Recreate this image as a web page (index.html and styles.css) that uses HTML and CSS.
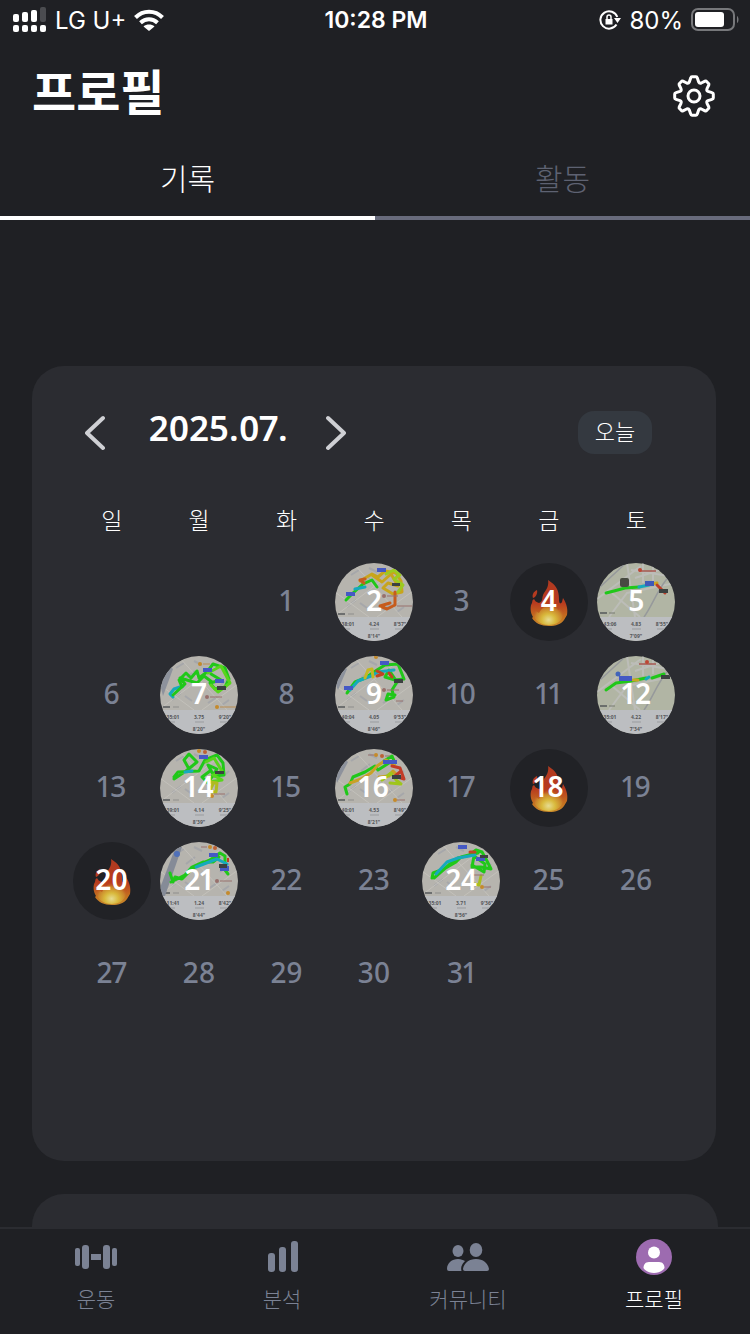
FILE: index.html
```html
<!DOCTYPE html>
<html lang="ko">
<head>
<meta charset="utf-8">
<meta name="viewport" content="width=device-width, initial-scale=1">
<title>프로필</title>
<link rel="stylesheet" href="styles.css">
</head>
<body>
<svg class="defs" aria-hidden="true">
  <defs>
    <linearGradient id="fire-outer" x1="0" y1="0" x2="0" y2="1">
      <stop offset="0" stop-color="#b03a20"/><stop offset=".5" stop-color="#b83b1f"/><stop offset=".8" stop-color="#c4701f"/><stop offset="1" stop-color="#c98a2c"/>
    </linearGradient>
    <radialGradient id="fire-inner" cx=".5" cy=".8" r=".65">
      <stop offset="0" stop-color="#e6dc92"/><stop offset=".35" stop-color="#d9b93c"/><stop offset=".7" stop-color="#c9812a"/><stop offset="1" stop-color="#b83b1f" stop-opacity="0"/>
    </radialGradient>
    <symbol id="fire" viewBox="0 0 78 78">
      <path fill="url(#fire-outer)" d="M38 17C46 22 49 27 49 36C49 40 50 42 52 39L53 35C57 41 58 47 57 52L54 57C51 61 46 63 39 63C31 63 25 60 22 55L23 54C20 49 20 43 22 40C23 36 22 38 24 36C25 38 26 39 29 40C34 38 31 35 34 30C37 26 39 22 38 17ZM27 27C28 31 25 35 23 35C22 32 23 29 27 27Z"/>
      <path fill="url(#fire-inner)" d="M39 36C41 42 47 42 48 47L53 45C55 53 51 62 39 62C28 62 22 55 24 47L29 50C31 45 37 43 39 36Z"/>
    </symbol>
    <symbol id="city" viewBox="0 0 78 78">
      <rect width="78" height="78" fill="#b6b4ae"/>
      <path fill="none" stroke="#a6a7aa" stroke-width="2" d="M16 12l8-5M26 22l9-7M12 44l9-7M25 40l7 5M48 47l9-6M60 30l9-8M34 5l8 4M62 49l7-5"/>
      <path fill="none" stroke="#c3c1bb" stroke-width="1" d="M0 29L34 54M18 0L67 54M4 50L66 3M42 54L78 28"/>
      <rect y="54" width="78" height="24" fill="#bcbec1"/>
      <path stroke="#55585a" stroke-width="1.5" d="M3 51h7"/><path stroke="#8e8e8c" stroke-width="1" d="M13 51h6"/>
      <path stroke="#999b9e" stroke-width="1" d="M35 66h9M60 66h8M10 66h5"/>
    </symbol>
    <symbol id="park" viewBox="0 0 78 78">
      <rect width="78" height="78" fill="#b1b5a4"/>
      <path fill="none" stroke="#bcbdb8" stroke-width="2" d="M30 0L38 54M0 36L44 3M12 54L30 30L78 20M34 7L78 14M38 15L78 2M46 0V20M56 0V18M15 30L43 54"/>
      <path fill="none" stroke="#96999b" stroke-width="1.5" d="M3 24L29 0M47 54C55 43 59 30 69 17L78 5"/>
      <path fill="none" stroke="#a75850" stroke-width="1.5" d="M42 8h17"/>
      <rect y="54" width="78" height="24" fill="#bcbec1"/>
      <path stroke="#55585a" stroke-width="1.5" d="M3 50h7"/><path stroke="#777b70" stroke-width="1" d="M12 50h6"/>
      <path stroke="#999b9e" stroke-width="1" d="M35 66h9M60 66h8M10 66h5"/>
    </symbol>
  </defs>
</svg>

<div class="app">
  <div class="status">
    <div class="status-side">
      <svg width="34" height="26" viewBox="0 0 34 26" fill="#fff" aria-hidden="true">
        <rect x="0" y="7" width="6" height="8" rx="2"/><rect x="9" y="5" width="6" height="10" rx="2"/><rect x="18" y="3" width="6" height="12" rx="2"/><rect x="27" y="0" width="6" height="15" rx="2" fill="#4b4c50"/>
        <rect x="0" y="18" width="6" height="7" rx="2"/><rect x="9" y="18" width="6" height="7" rx="2"/><rect x="18" y="18" width="6" height="7" rx="2"/><rect x="27" y="18" width="6" height="7" rx="2"/>
      </svg>
      <span>LG U+</span>
      <svg width="30" height="22" viewBox="0 0 30 22" fill="none" stroke="#fff" stroke-width="4" aria-hidden="true">
        <path d="M1.500 8.500C9 .7 21 .7 28.500 8.500"/><path d="M6.500 13.800C11.500 9.200 18.500 9.200 23.500 13.800"/><path fill="#fff" stroke="none" d="M9.500 17.400C12.500 14.800 17.500 14.800 20.500 17.400L15 22Z"/>
      </svg>
    </div>
    <span class="clock">10:28 PM</span>
    <div class="status-side status-right">
      <svg width="22" height="22" viewBox="0 0 22 22" fill="none" stroke="#fff" stroke-width="2" aria-hidden="true">
        <path d="M17.500 15.500A8.700 8.700 0 1 1 18.300 8"/><path fill="#fff" stroke="none" d="M15 9h7l-3.500 5zM6.500 10h7v5.500h-7z"/><path stroke-width="1.500" d="M8 10.500V8a2 2 0 0 1 4 0v2.500"/>
      </svg>
      <span>80%</span>
      <svg width="48" height="24" viewBox="0 0 48 24" aria-hidden="true">
        <rect x="1" y="1" width="42" height="21" rx="6" fill="none" stroke="#77787b" stroke-width="2"/><rect x="4" y="4" width="29" height="15" rx="3" fill="#fff"/><path fill="#77787b" d="M46 8c2 1 2 6 0 7z"/>
      </svg>
    </div>
  </div>

  <header class="header">
    <h1>프로필</h1>
    <button class="icon-button" aria-label="설정">
      <svg width="44" height="44" viewBox="-22 -22 44 44" fill="none" stroke="#fff" stroke-width="3" stroke-linejoin="round" aria-hidden="true">
        <path d="M-2-19.300H2Q3-19.300 3.300-18L4.700-14Q5.500-12.300 7.300-13L11-14.800Q12-15.300 12.800-14.300L14.300-12.800Q15.300-12 14.800-11L13-7.300Q12.300-5.500 14-4.700L18-3.300Q19.300-3 19.300-2V2Q19.300 3 18 3.300L14 4.700Q12.300 5.500 13 7.300L14.800 11Q15.300 12 14.300 12.800L12.800 14.300Q12 15.300 11 14.800L7.300 13Q5.500 12.300 4.700 14L3.300 18Q3 19.300 2 19.300H-2Q-3 19.300-3.300 18L-4.700 14Q-5.500 12.300-7.300 13L-11 14.800Q-12 15.300-12.800 14.300L-14.300 12.800Q-15.300 12-14.800 11L-13 7.300Q-12.300 5.500-14 4.700L-18 3.300Q-19.300 3-19.300 2V-2Q-19.300-3-18-3.300L-14-4.700Q-12.300-5.500-13-7.300L-14.800-11Q-15.300-12-14.300-12.800L-12.800-14.300Q-12-15.300-11-14.800L-7.300-13Q-5.500-12.300-4.700-14L-3.300-18Q-3-19.300-2-19.300Z"/><circle r="6"/>
      </svg>
    </button>
  </header>

  <div class="tabs" role="tablist">
    <button class="tab tab-active" role="tab" aria-selected="true">기록</button>
    <button class="tab" role="tab" aria-selected="false">활동</button>
  </div>

  <main class="content">
    <section class="card calendar">
      <div class="month-bar">
        <button class="icon-button" aria-label="이전 달"><svg width="20" height="36" viewBox="0 0 20 36" fill="none" stroke="#cfd0d4" stroke-width="4" stroke-linecap="round" stroke-linejoin="round"><path d="M18 3L2 18L18 33"/></svg></button>
        <h2>2025.07.</h2>
        <button class="icon-button" aria-label="다음 달"><svg width="20" height="36" viewBox="0 0 20 36" fill="none" stroke="#cfd0d4" stroke-width="4" stroke-linecap="round" stroke-linejoin="round"><path d="M2 3L18 18L2 33"/></svg></button>
        <button class="today">오늘</button>
      </div>
      <table class="days">
        <thead><tr><th>일</th><th>월</th><th>화</th><th>수</th><th>목</th><th>금</th><th>토</th></tr></thead>
        <tbody>
          <tr>
            <td></td><td></td><td><button class="day">1</button></td>
            <td><button class="day day-done"><svg class="thumb" viewBox="0 0 78 78" aria-hidden="true"><use href="#city"/>
              <g class="route"><path stroke="#20c819" d="M11 37L18 30L28 21L37 17L42 24"/><path stroke="#16a9bd" d="M20 26L30 24"/><path stroke="#c8a51c" d="M25 18L37 11L43 14L50 8L61 10L66 18L67 29L58 31L48 25L53 20L63 23L56 11L47 19L37 12"/><path stroke="#c65c1d" d="M30 16L25 17L29 20M60 29V42L52 46L45 43L55 40"/><path stroke="#9acb20" d="M51 11L59 7L65 12L59 16L68 22L63 29"/></g>
              <path fill="#4559c4" d="M42 5h9v4h-9zM11 29h9v4h-9z"/><path fill="#3c4140" d="M57 20h8v3h-8z"/><circle cx="49" cy="33" r="2" fill="#98706c"/><path stroke="#98706c" d="M52 33h11M62 43h15"/><text x="13" y="63">38:01</text><text x="39" y="63">4.24</text><text x="65" y="63">8'57"</text><text x="39" y="75">8'14"</text></svg><span>2</span></button></td>
            <td><button class="day">3</button></td>
            <td><button class="day day-done"><svg class="thumb" viewBox="0 0 78 78" aria-hidden="true"><use href="#fire"/></svg><span>4</span></button></td>
            <td><button class="day day-done"><svg class="thumb" viewBox="0 0 78 78" aria-hidden="true"><use href="#park"/>
              <g class="route"><path stroke="#20c819" d="M9 30L17 28L28 25L42 24"/><path stroke="#16a9bd" d="M42 24L52 22"/><path stroke="#cba522" d="M54 21L60 20"/><path stroke="#bc3d28" d="M60 22L68 30"/></g>
              <rect x="23" y="15" width="9" height="9" rx="2" fill="#484b42"/><path fill="#3e59b8" d="M48 18h9v5h-9z"/><path fill="#3c4140" d="M62 26h9v4h-9z"/><circle cx="43" cy="7" r="2" fill="#bd4634"/><text x="13" y="63">43:06</text><text x="39" y="63">4.83</text><text x="65" y="63">8'55"</text><text x="39" y="75">7'09"</text></svg><span>5</span></button></td>
          </tr>
          <tr>
            <td><button class="day">6</button></td>
            <td><button class="day day-done"><svg class="thumb" viewBox="0 0 78 78" aria-hidden="true"><use href="#city"/><path fill="#8d929c" d="M0 28L8 9L13 13L3 40Z"/>
              <g class="route"><path stroke="#16a9bd" d="M13 41L10 38L14 33L23 30"/><path stroke="#20c819" d="M22 31L19 24L26 17L31 22L37 15L39 22L47 16L53 8L65 12L69 23L65 31L55 33L50 27L61 24L51 18M13 39L25 28L20 22L37 27L44 20L52 26"/><path stroke="#58d51c" d="M48 17L61 10L70 27L58 36L51 29"/></g>
              <path fill="#4559c4" d="M43 12h9v4h-9zM55 23h9v4h-9z"/><path fill="#3c4140" d="M57 30h9v4h-9z"/><circle cx="40" cy="8" r="2" fill="#c58a2b"/><circle cx="57" cy="51" r="2" fill="#c58a2b"/><path stroke="#b98c50" d="M43 8h7M60 51h16"/><circle cx="47" cy="41" r="2" fill="#98706c"/><path stroke="#98706c" d="M50 41h12"/><text x="13" y="63">35:01</text><text x="39" y="63">3.75</text><text x="65" y="63">9'20"</text><text x="39" y="75">8'20"</text></svg><span>7</span></button></td>
            <td><button class="day">8</button></td>
            <td><button class="day day-done"><svg class="thumb" viewBox="0 0 78 78" aria-hidden="true"><use href="#city"/><path fill="#8d929c" d="M0 27L8 10L12 13L3 34Z"/>
              <g class="route"><path stroke="#20c819" d="M12 37L20 26L30 22L42 14L50 9L63 8L69 23L60 24L50 21L54 14L62 26L57 34L59 41L51 44L53 38L60 39"/><path stroke="#16a9bd" d="M15 34L23 25L36 20L43 16L59 14"/><path stroke="#c5b721" d="M30 22L33 14L37 13L38 21"/><path stroke="#bf4523" d="M42 15L48 18L42 20M54 17L57 21"/></g>
              <path fill="#4559c4" d="M45 5h9v4h-9zM9 30h9v4h-9z"/><path fill="#3c4140" d="M59 23h9v4h-9z"/><circle cx="41" cy="1" r="2" fill="#c58a2b"/><circle cx="49" cy="34" r="2" fill="#98706c"/><path stroke="#98706c" d="M52 34h12M61 45h7"/><text x="13" y="63">40:04</text><text x="39" y="63">4.05</text><text x="65" y="63">9'53"</text><text x="39" y="75">8'46"</text></svg><span>9</span></button></td>
            <td><button class="day">10</button></td><td><button class="day">11</button></td>
            <td><button class="day day-done"><svg class="thumb" viewBox="0 0 78 78" aria-hidden="true"><use href="#park"/>
              <g class="route"><path stroke="#20c819" d="M9 34L19 27L34 25L49 22M55 22L67 18"/><path stroke="#16a9bd" d="M49 23L52 21"/><path stroke="#cba522" d="M36 24h5"/></g>
              <path fill="#4559c4" d="M22 20h13v5H22z"/><circle cx="21" cy="18" r="2.500" fill="#4164b8"/><path fill="#3c4140" d="M64 19h9v4h-9z"/><circle cx="50" cy="6" r="2" fill="#bd4634"/><text x="13" y="63">35:01</text><text x="39" y="63">4.22</text><text x="65" y="63">8'17"</text><text x="39" y="75">7'34"</text></svg><span>12</span></button></td>
          </tr>
          <tr>
            <td><button class="day">13</button></td>
            <td><button class="day day-done"><svg class="thumb" viewBox="0 0 78 78" aria-hidden="true"><use href="#city"/>
              <g class="route"><path stroke="#20c819" d="M14 30L26 22L37 13L29 5L24 11L29 20M14 28L18 23L39 22L45 11L57 6L63 14L64 26L54 27L48 16L57 20L48 34L42 28L50 22"/><path stroke="#16a9bd" d="M25 23L32 22"/><path stroke="#58d51c" d="M46 13L54 9L62 22L53 26L62 31L49 33"/><path stroke="#aebb20" d="M50 33L57 34L56 43L49 43L53 35"/></g>
              <path fill="#4559c4" d="M39 6h9v4h-9z"/><path fill="#3c4140" d="M55 22h9v3h-9z"/><circle cx="39" cy="2" r="2" fill="#c58a2b"/><circle cx="45" cy="3" r="2" fill="#bd6134"/><circle cx="52" cy="47" r="2" fill="#c58a2b"/><path stroke="#98706c" d="M54 45h11"/><text x="13" y="63">39:01</text><text x="39" y="63">4.14</text><text x="65" y="63">9'25"</text><text x="39" y="75">8'39"</text></svg><span>14</span></button></td>
            <td><button class="day">15</button></td>
            <td><button class="day day-done"><svg class="thumb" viewBox="0 0 78 78" aria-hidden="true"><use href="#city"/><path fill="#8d929c" d="M0 26L8 9L13 13L2 34Z"/>
              <g class="route"><path stroke="#20c819" d="M12 45L10 38L15 35L18 28L30 23L40 17L43 21L54 14L49 12L57 7L60 14"/><path stroke="#c9a126" d="M15 34L26 30L36 24L42 17L51 11L59 16M44 28L54 27L58 22L64 28"/><path stroke="#9fc51c" d="M47 31L56 24L61 31L66 35L55 34"/><path stroke="#c23b26" d="M57 17L65 19L69 30L60 27L65 23"/></g>
              <path fill="#4559c4" d="M48 11h14v4H48z"/><path fill="#3c4140" d="M57 26h9v4h-9z"/><circle cx="41" cy="6" r="2" fill="#c58a2b"/><circle cx="47" cy="7" r="2" fill="#bd6134"/><circle cx="60" cy="51" r="2" fill="#c58a2b"/><path stroke="#98706c" d="M33 6h6M50 7h5M62 51h8"/><text x="13" y="63">40:01</text><text x="39" y="63">4.53</text><text x="65" y="63">8'49"</text><text x="39" y="75">8'21"</text></svg><span>16</span></button></td>
            <td><button class="day">17</button></td>
            <td><button class="day day-done"><svg class="thumb" viewBox="0 0 78 78" aria-hidden="true"><use href="#fire"/></svg><span>18</span></button></td>
            <td><button class="day">19</button></td>
          </tr>
          <tr>
            <td><button class="day day-done"><svg class="thumb" viewBox="0 0 78 78" aria-hidden="true"><use href="#fire"/></svg><span>20</span></button></td>
            <td><button class="day day-done"><svg class="thumb" viewBox="0 0 78 78" aria-hidden="true"><use href="#city"/><path fill="#858b97" d="M16 4L22 5L5 54H0V46Z"/>
              <g class="route"><path stroke="#20c819" d="M10 31L13 40L15 35L22 37L31 28L38 23L50 18L60 11L65 14L65 28L68 32M11 40L25 33L32 25L43 20L53 20L59 15"/><path stroke="#16a9bd" d="M36 25L49 20L57 17L67 22"/></g>
              <path fill="#4559c4" d="M49 11h9v4h-9zM60 24h9v5h-9z"/><path fill="#3c4140" d="M59 22h8v4h-8z"/><circle cx="17" cy="12" r="3" fill="#4f70b9"/><circle cx="50" cy="5" r="2" fill="#c58a2b"/><circle cx="55" cy="6" r="2" fill="#bd6134"/><circle cx="57" cy="39" r="2" fill="#98706c"/><circle cx="68" cy="51" r="2" fill="#c58a2b"/><path stroke="#98706c" d="M60 39h12M41 5h6"/><path stroke="#c23b26" stroke-width="2" d="M68 16v4"/><text x="13" y="63">11:41</text><text x="39" y="63">1.24</text><text x="65" y="63">8'42"</text><text x="39" y="75">8'44"</text></svg><span>21</span></button></td>
            <td><button class="day">22</button></td><td><button class="day">23</button></td>
            <td><button class="day day-done"><svg class="thumb" viewBox="0 0 78 78" aria-hidden="true"><use href="#city"/>
              <g class="route"><path stroke="#20c819" d="M10 36L11 31L22 27L34 20L39 15L47 13L54 8L60 10L65 19L69 27L59 25L50 25L52 14L63 22L62 30L50 23M12 36L28 22L36 16L56 11"/><path stroke="#16a9bd" d="M14 32L25 20L36 16L53 13"/><path stroke="#a7bd20" d="M59 34L57 43L52 42"/><path stroke="#bf4523" d="M48 10h5"/></g>
              <path fill="#4559c4" d="M36 3h9v4h-9zM54 15h9v4h-9z"/><path fill="#3c4140" d="M58 13h8v3h-8z"/><circle cx="60" cy="45" r="2" fill="#c58a2b"/><path stroke="#98706c" d="M62 45h7M51 33h11"/><text x="13" y="63">35:01</text><text x="39" y="63">3.71</text><text x="65" y="63">9'36"</text><text x="39" y="75">8'56"</text></svg><span>24</span></button></td>
            <td><button class="day">25</button></td><td><button class="day">26</button></td>
          </tr>
          <tr>
            <td><button class="day">27</button></td><td><button class="day">28</button></td><td><button class="day">29</button></td><td><button class="day">30</button></td><td><button class="day">31</button></td><td></td><td></td>
          </tr>
        </tbody>
      </table>
    </section>
    <section class="card card-next"></section>
  </main>

  <nav class="nav">
    <a class="nav-item" href="#workout">
      <svg width="42" height="36" viewBox="0 0 42 36" fill="currentColor" aria-hidden="true"><rect x="0" y="9" width="5" height="18" rx="2"/><rect x="7" y="6" width="7" height="24" rx="3"/><path d="M16 15h10v6H16z"/><rect x="28" y="6" width="7" height="24" rx="3"/><rect x="37" y="9" width="5" height="18" rx="2"/></svg>
      <span>운동</span>
    </a>
    <a class="nav-item" href="#analysis">
      <svg width="36" height="36" viewBox="0 0 36 36" fill="currentColor" aria-hidden="true"><rect x="4" y="14" width="7" height="19" rx="3"/><rect x="15" y="8" width="7" height="25" rx="3"/><rect x="27" y="2" width="7" height="31" rx="3"/></svg>
      <span>분석</span>
    </a>
    <a class="nav-item" href="#community">
      <svg width="42" height="36" viewBox="0 0 42 36" fill="currentColor" aria-hidden="true"><ellipse cx="11" cy="12" rx="5.500" ry="6"/><ellipse cx="29" cy="11" rx="6.300" ry="7"/><path d="M0 30C0 24 5 20 11 20C14 20 16 21 18 22C15 25 13.500 28 14.500 32H2Q0 32 0 30ZM16 30C17 24 22 20 29 20S41 24 42 30Q42 32 40 32H18Q16 32 16 30Z"/></svg>
      <span>커뮤니티</span>
    </a>
    <a class="nav-item nav-active" href="#profile" aria-current="page">
      <svg width="36" height="36" viewBox="0 0 36 36" aria-hidden="true"><circle cx="18" cy="18" r="18" fill="#9d6bb0"/><circle cx="18" cy="13.500" r="6" fill="#fff"/><path fill="#fff" d="M13 23H23C27 23 28.500 26 28.500 29C27 32 22 34 18 34S9 32 7.500 29C7.500 26 9 23 13 23Z"/></svg>
      <span>프로필</span>
    </a>
  </nav>
</div>
</body>
</html>
```
FILE: styles.css
```css
* { box-sizing: border-box; }

body {
  margin: 0;
  background: #1f2024;
  color: #fff;
  font-family: "Noto Sans CJK KR", sans-serif;
  font-weight: 300;
}

button {
  border: 0;
  padding: 0;
  background: none;
  color: inherit;
  font: inherit;
}

svg { display: block; flex: none; }

.defs { position: absolute; width: 0; height: 0; }

.app {
  display: flex;
  flex-direction: column;
  height: 100vh;
}

.status {
  display: grid;
  grid-template-columns: 1fr auto 1fr;
  align-items: center;
  height: 40px;
  padding: 0 11px 0 13px;
  font-family: Inter, sans-serif;
  font-size: 24px;
  font-weight: 400;
}

.status-side { display: flex; align-items: center; gap: 8px; }
.status-right { justify-content: flex-end; }
.clock { font-size: 23px; font-weight: 600; }

.header {
  display: flex;
  align-items: center;
  justify-content: space-between;
  height: 104px;
  padding: 8px 34px 0 32px;
}

.header h1 {
  margin: 0;
  padding-bottom: 14px;
  font-size: 48px;
  line-height: 56px;
  font-weight: 700;
}

.tabs { display: grid; grid-template-columns: 1fr 1fr; }

.tab {
  height: 76px;
  padding-bottom: 6px;
  border-bottom: 4px solid #686b7c;
  color: #5e6272;
  font-size: 30px;
}

.tab-active { border-color: #fff; color: #fff; }

.content {
  flex: 1;
  min-height: 0;
  overflow: hidden;
  padding: 146px 32px 0;
}

.card { border-radius: 32px; background: #2b2c31; }

.calendar {
  margin-right: 2px;
  padding: 45px 36px 141px;
}

.month-bar {
  display: flex;
  align-items: center;
  padding: 0 28px 0 17px;
}

.month-bar h2 {
  margin: 0;
  padding: 0 38px 10px 44px;
  font: 600 35px/33px "Noto Sans", sans-serif;
  font-variant-numeric: proportional-nums;
}

.today {
  width: 74px;
  height: 43px;
  margin-left: auto;
  padding-bottom: 6px;
  border-radius: 16px;
  background: #343940;
  font-size: 22px;
}

.days {
  width: 100%;
  margin-top: 45px;
  border-collapse: collapse;
  table-layout: fixed;
}

.days th {
  height: 40px;
  padding: 0;
  font-size: 23px;
  line-height: 40px;
  font-weight: 300;
}

.days td { height: 93px; padding: 0; }
.days tbody::before { content: ""; display: block; height: 16px; }

.day {
  display: grid;
  place-items: center;
  width: 78px;
  height: 78px;
  margin: 0 auto;
  overflow: hidden;
  border-radius: 50%;
  color: #7b8294;
  font: 500 28px/32px "Noto Sans", sans-serif;
  font-variant-numeric: proportional-nums;
  padding-bottom: 4px;
}

.day-done {
  grid-template: 78px / 78px;
  padding: 0;
  background: #212226;
  color: #fff;
  font-weight: 600;
}

.day-done > * { grid-area: 1 / 1; }
.day-done span { z-index: 1; padding-bottom: 4px; }

.thumb {
  width: 78px;
  height: 78px;
  font: 700 5px "Noto Sans", sans-serif;
  fill: #555659;
  text-anchor: middle;
}

.route {
  fill: none;
  stroke-width: 3;
  stroke-linecap: round;
  stroke-linejoin: round;
}

.card-next { height: 400px; margin-top: 33px; }

.nav {
  display: grid;
  grid-template-columns: repeat(4, 1fr);
  height: 107px;
  padding: 10px 3px 0;
  border-top: 2px solid #2b2c31;
  background: #1f2024;
}

.nav-item {
  display: flex;
  flex-direction: column;
  align-items: center;
  gap: 7px;
  color: #7b8294;
  font-size: 21px;
  line-height: 32px;
  text-decoration: none;
}

.nav-active { color: #fff; }
```
